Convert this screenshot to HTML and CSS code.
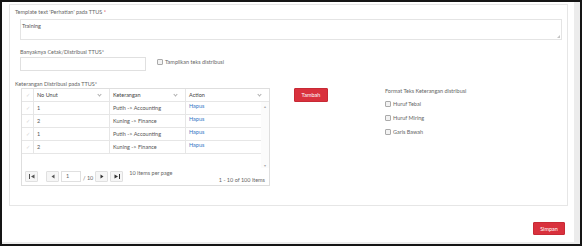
FILE: index.html
```html
<!DOCTYPE html>
<html lang="id">
  <head>
    <meta charset="UTF-8" />
    <title>Template TTUS</title>
    <link rel="stylesheet" href="styles.css">
  </head>
  <body>
    <div class="frame">
      <div class="viewport">
        <div class="content">
          <section class="panel">
            <label class="lbl lbl-template">Template text 'Perhatian' pada TTUS <span class="req">*</span></label>
            <div class="textarea">Training<span class="grip"></span></div>

            <label class="lbl lbl-count">Banyaknya Cetak/Distribusi TTUS*</label>
            <div class="count-row">
              <div class="input"></div>
              <label class="check"><span class="box"></span>Tampilkan teks distribusi</label>
            </div>

            <label class="lbl lbl-dist">Keterangan Distribusi pada TTUS*</label>
            <div class="dist-row">
              <div class="grid">
                <div class="g-head">
                  <div class="cell sel">&#10003;</div>
                  <div class="cell">No Unut<span class="chev"></span></div>
                  <div class="cell">Keterangan<span class="chev"></span></div>
                  <div class="cell">Action<span class="chev"></span></div>
                </div>
                <div class="g-body">
                  <div class="g-rows">
                    <div class="g-row">
                      <div class="cell sel">&#10003;</div>
                      <div class="cell">1</div>
                      <div class="cell">Putih -&gt; Accounting</div>
                      <div class="cell act"><a href="#">Hapus</a></div>
                    </div>
                    <div class="g-row">
                      <div class="cell sel">&#10003;</div>
                      <div class="cell">2</div>
                      <div class="cell">Kuning -&gt; Finance</div>
                      <div class="cell act"><a href="#">Hapus</a></div>
                    </div>
                    <div class="g-row">
                      <div class="cell sel">&#10003;</div>
                      <div class="cell">1</div>
                      <div class="cell">Putih -&gt; Accounting</div>
                      <div class="cell act"><a href="#">Hapus</a></div>
                    </div>
                    <div class="g-row">
                      <div class="cell sel">&#10003;</div>
                      <div class="cell">2</div>
                      <div class="cell">Kuning -&gt; Finance</div>
                      <div class="cell act"><a href="#">Hapus</a></div>
                    </div>
                  </div>
                  <div class="g-scroll">
                    <span class="arr">&#9652;</span>
                    <span class="arr">&#9662;</span>
                  </div>
                </div>
                <div class="pager">
                  <span class="pbtn">
                    <svg width="6" height="5" viewBox="0 0 6 5"><rect x="0" y="0" width="1" height="5" fill="#555"/><path d="M5.5 0.5 L2 2.5 L5.5 4.5 Z" fill="#555"/></svg>
                  </span>
                  <span class="pbtn gap">
                    <svg width="4" height="5" viewBox="0 0 4 5"><path d="M3.5 0.5 L0.5 2.5 L3.5 4.5 Z" fill="#555"/></svg>
                  </span>
                  <span class="page-input">1</span>
                  <span class="of">/ 10</span>
                  <span class="pbtn">
                    <svg width="4" height="5" viewBox="0 0 4 5"><path d="M0.5 0.5 L3.5 2.5 L0.5 4.5 Z" fill="#333"/></svg>
                  </span>
                  <span class="pbtn">
                    <svg width="6" height="5" viewBox="0 0 6 5"><path d="M0.5 0.5 L4 2.5 L0.5 4.5 Z" fill="#333"/><rect x="5" y="0" width="1" height="5" fill="#333"/></svg>
                  </span>
                  <span class="per-page">10 items per page</span>
                  <span class="range">1 - 10 of 100 items</span>
                </div>
              </div>

              <button class="btn btn-add">Tambah</button>

              <div class="format">
                <div class="format-title">Format Teks Keterangan distribusi</div>
                <label class="check"><span class="box"></span>Huruf Tebal</label>
                <label class="check"><span class="box"></span>Huruf Miring</label>
                <label class="check"><span class="box"></span>Garis Bawah</label>
              </div>
            </div>
          </section>

          <div class="actions">
            <button class="btn btn-save">Simpan</button>
          </div>
        </div>
        <div class="vscroll"></div>
      </div>
      <div class="hscroll"></div>
    </div>
  </body>
</html>
```

FILE: styles.css
```css
body {
  margin: 0;
  font-family: "Lato", "Liberation Sans", sans-serif;
  font-size: 5.5px;
  color: #666;
  background: #fff;
}

.frame {
  width: 582px;
  height: 246px;
  box-sizing: border-box;
  border: 2px solid #151515;
  display: flex;
  flex-direction: column;
}

.viewport {
  flex: 1;
  display: flex;
  min-height: 0;
}

.content {
  flex: 1;
  padding: 2px 6px 0 7px;
}

.vscroll {
  width: 6px;
  background: #ececec;
}

.hscroll {
  height: 2px;
  background: #ececec;
}

.panel {
  height: 202px;
  box-sizing: border-box;
  border: 1px solid #e6e6e6;
  padding: 3px 5px 0 0;
  display: flex;
  flex-direction: column;
}

.lbl {
  display: block;
  line-height: 8px;
  color: #666;
}

.lbl-template {
  padding-left: 5px;
}

.req {
  color: #d9343f;
}

.textarea {
  position: relative;
  margin: 3px 0 0 10px;
  height: 21px;
  box-sizing: border-box;
  border: 1px solid #e4e4e4;
  padding: 3px 0 0 1px;
  line-height: 7px;
  color: #555;
}

.grip {
  position: absolute;
  right: 1px;
  bottom: 1px;
  width: 0;
  height: 0;
  border-left: 3px solid transparent;
  border-bottom: 3px solid #c4c4c4;
}

.lbl-count {
  margin: 8px 0 1px 10px;
}

.count-row {
  display: flex;
  align-items: center;
  margin-left: 10px;
}

.input {
  width: 126px;
  height: 14px;
  box-sizing: border-box;
  border: 1px solid #e0e0e0;
}

.count-row .check {
  margin: -4px 0 0 11px;
}

.check {
  display: flex;
  align-items: center;
  line-height: 8px;
  color: #666;
}

.box {
  width: 4px;
  height: 4px;
  border: 1px solid #aaa;
  border-radius: 1px;
  background: #f2f2f2;
  margin-right: 2px;
}

.lbl-dist {
  margin: 9px 0 0 5px;
}

.dist-row {
  display: flex;
  align-items: flex-start;
  margin-left: 11px;
}

/* grid */
.grid {
  width: 249px;
  height: 98px;
  box-sizing: border-box;
  border: 1px solid #dedede;
  display: flex;
  flex-direction: column;
}

.g-head,
.g-row {
  display: grid;
  grid-template-columns: 12px 76px 76px 1fr;
  height: 13px;
  border-bottom: 1px solid #e6e6e6;
  box-sizing: border-box;
}

.cell {
  position: relative;
  display: flex;
  align-items: center;
  padding-left: 3px;
  border-right: 1px solid #e6e6e6;
  color: #555;
  white-space: nowrap;
}

.cell:last-child {
  border-right: none;
}

.g-head .cell {
  color: #444;
}

.cell.sel {
  justify-content: center;
  padding-left: 0;
  color: #d4d4d4;
  font-size: 5px;
}

.chev {
  position: absolute;
  right: 8px;
  top: 4px;
  width: 2px;
  height: 2px;
  border-right: 1px solid #b0b0b0;
  border-bottom: 1px solid #b0b0b0;
  transform: rotate(45deg);
}

.g-body {
  flex: 1;
  display: flex;
  min-height: 0;
}

.g-rows {
  flex: 1;
}

.cell.act {
  align-items: flex-start;
  padding-top: 1px;
}

.cell.act a {
  color: #3476c6;
  text-decoration: none;
  line-height: 6px;
}

.g-scroll {
  width: 8px;
  display: flex;
  flex-direction: column;
  justify-content: space-between;
  align-items: center;
  background: #fbfbfb;
  color: #aaa;
  font-size: 4px;
  padding: 2px 0 0;
}

.pager {
  height: 17px;
  display: flex;
  align-items: center;
  padding: 0 4px 0 3px;
  color: #666;
}

.pbtn {
  width: 13px;
  height: 11px;
  box-sizing: border-box;
  border: 1px solid #e0e0e0;
  border-radius: 1px;
  background: #f6f6f6;
  display: flex;
  align-items: center;
  justify-content: center;
  margin-right: 2px;
}

.pbtn.gap {
  margin-left: 6px;
}

.page-input {
  width: 20px;
  height: 11px;
  box-sizing: border-box;
  border: 1px solid #e0e0e0;
  background: #fff;
  padding-left: 4px;
  line-height: 9px;
}

.of {
  margin: 3px 2px 0 2px;
}

.per-page {
  align-self: flex-start;
  margin: 2px 0 0 4px;
}

.range {
  margin-left: auto;
  align-self: flex-end;
  margin-bottom: 2px;
}

/* buttons */
.btn {
  font-family: "Lato", "Liberation Sans", sans-serif;
  font-size: 5.5px;
  color: #fff;
  background: #d9313d;
  border: 1px solid #c72a35;
  border-radius: 1px;
  padding: 0;
  height: 14px;
  cursor: pointer;
}

.btn-add {
  width: 34px;
  margin-left: 24px;
}

.format {
  margin: -1px 0 0 57px;
  display: flex;
  flex-direction: column;
}

.format-title {
  line-height: 8px;
  margin-bottom: 5px;
}

.format .check {
  margin-bottom: 6px;
}

.actions {
  display: flex;
  justify-content: flex-end;
  padding: 16px 3px 0 0;
}

.btn-save {
  width: 32px;
  height: 13px;
}
```
